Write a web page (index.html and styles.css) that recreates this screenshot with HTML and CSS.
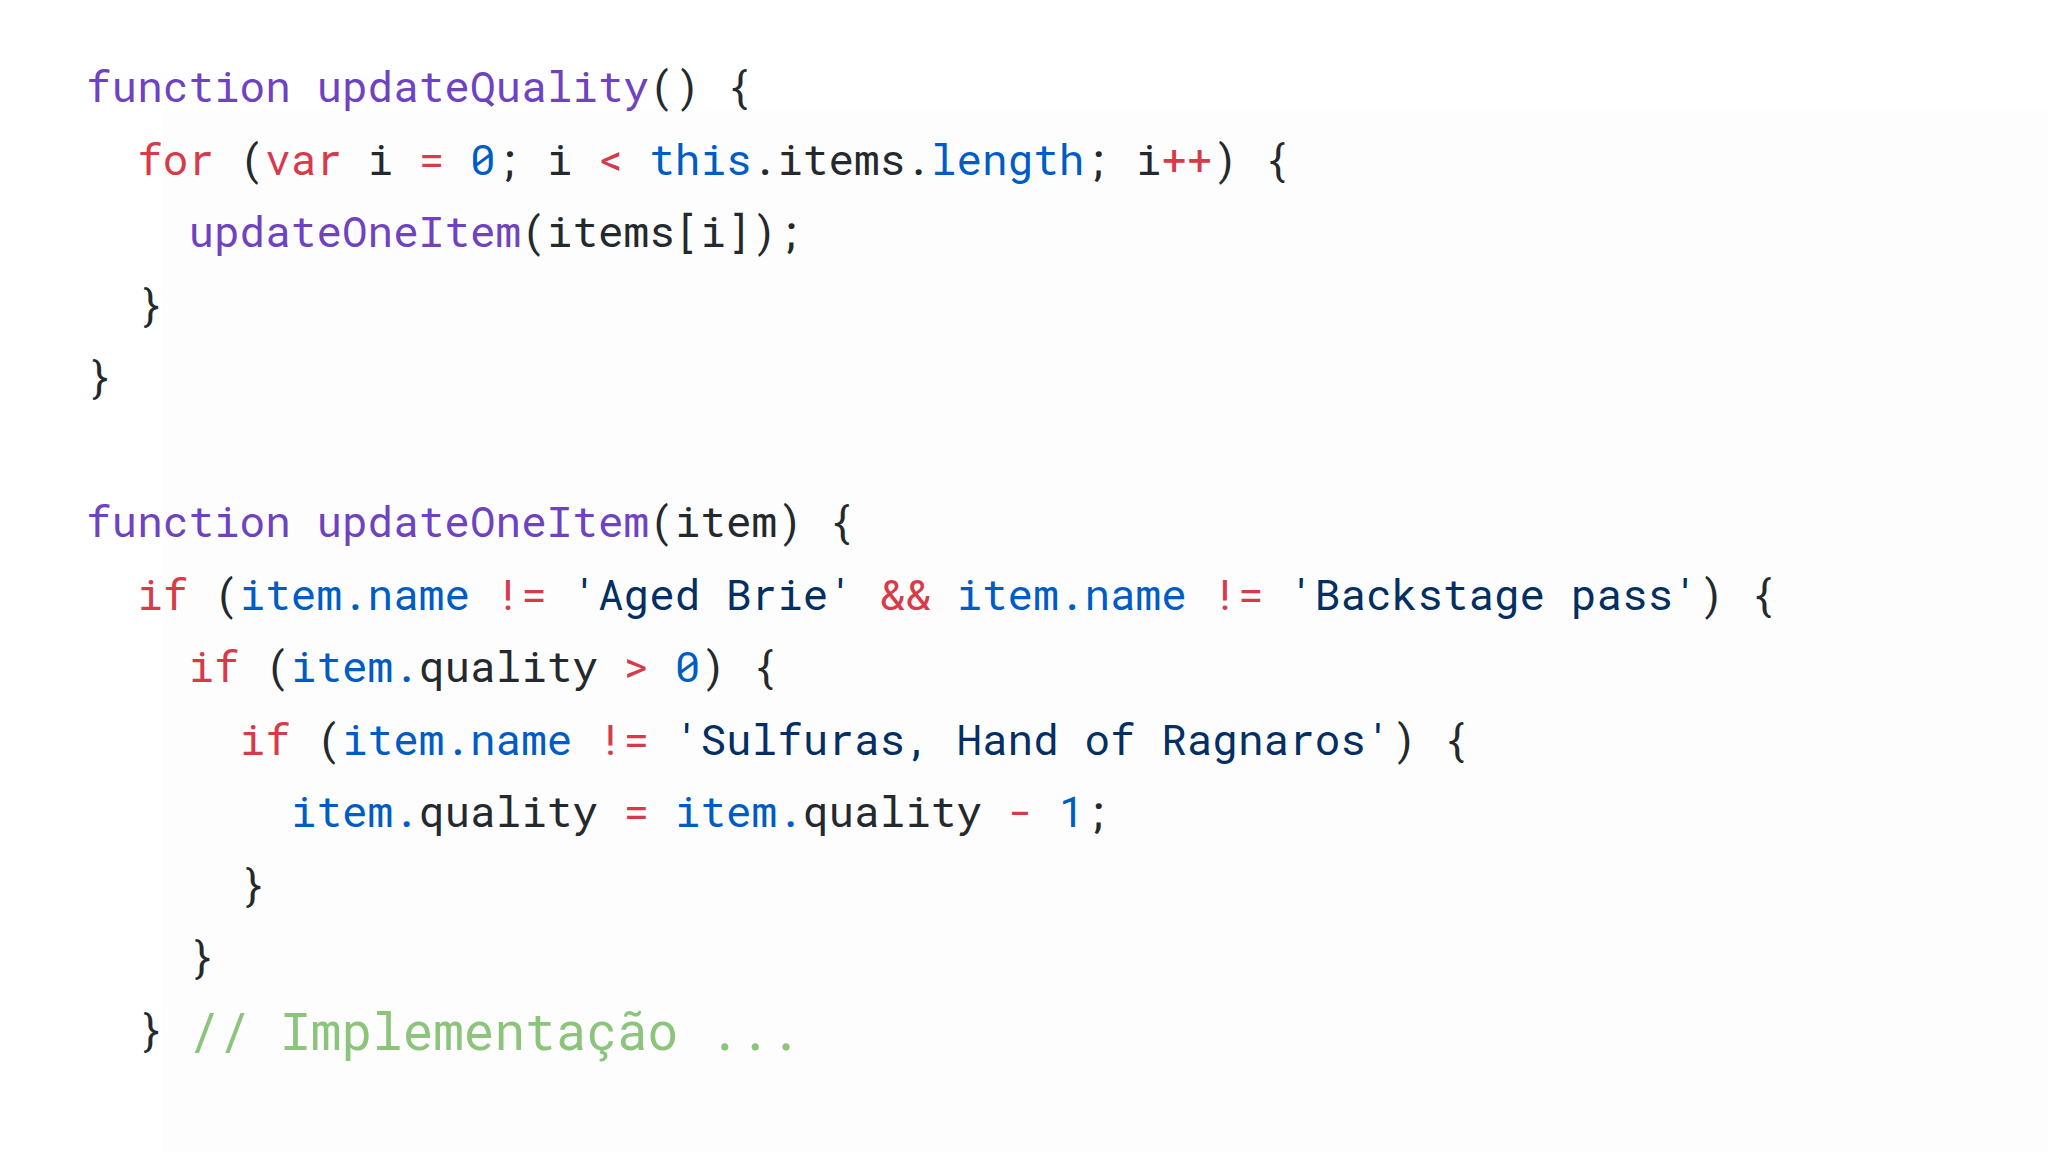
FILE: index.html
```html
<!DOCTYPE html>
<html lang="pt">
<head>
<meta charset="utf-8">
<title>Código</title>
<link rel="stylesheet" href="styles.css">
</head>
<body>
<main class="slide">
<pre class="code"><span class="fn">function updateQuality</span>() {
  <span class="kw">for</span> (<span class="kw">var</span> i <span class="kw">=</span> <span class="nu">0</span>; i <span class="kw">&lt;</span> <span class="nu">this</span>.items.<span class="nu">length</span>; i<span class="kw">++</span>) {
    <span class="fn">updateOneItem</span>(items[i]);
  }
}

<span class="fn">function updateOneItem</span>(item) {
  <span class="kw">if</span> (<span class="nu">item.name</span> <span class="kw">!=</span> <span class="st">'Aged Brie'</span> <span class="kw">&amp;&amp;</span> <span class="nu">item.name</span> <span class="kw">!=</span> <span class="st">'Backstage pass'</span>) {
    <span class="kw">if</span> (<span class="nu">item.</span>quality <span class="kw">&gt;</span> <span class="nu">0</span>) {
      <span class="kw">if</span> (<span class="nu">item.name</span> <span class="kw">!=</span> <span class="st">'Sulfuras, Hand of Ragnaros'</span>) {
        <span class="nu">item.</span>quality <span class="kw">=</span> <span class="nu">item.</span>quality <span class="kw">-</span> <span class="nu">1</span>;
      }
    }
  } <span class="cm">// Implementação ...</span></pre>
</main>
</body>
</html>
```

FILE: styles.css
```css
html, body {
  margin: 0;
  padding: 0;
}

body {
  width: 2048px;
  height: 1152px;
  overflow: hidden;
  background:
    linear-gradient(#ffffff, #ffffff) no-repeat 0 0 / 163px 100%,
    linear-gradient(#ffffff, #ffffff) no-repeat 0 0 / 100% 110px,
    #fdfdfd;
}

.slide {
  padding: 50px 0 0 86px;
}

.code {
  margin: 0;
  font-family: "Roboto Mono", "DejaVu Sans Mono", "Liberation Mono", monospace;
  font-size: 42.67px;
  line-height: 72.5px;
  color: #24292e;
  white-space: pre;
}

.fn { color: #6f42c1; }
.kw { color: #d73a49; }
.nu { color: #005cc5; }
.st { color: #032f62; }
.cm {
  color: #8cc47c;
  font-size: 51px;
  vertical-align: -5px;
}
```
